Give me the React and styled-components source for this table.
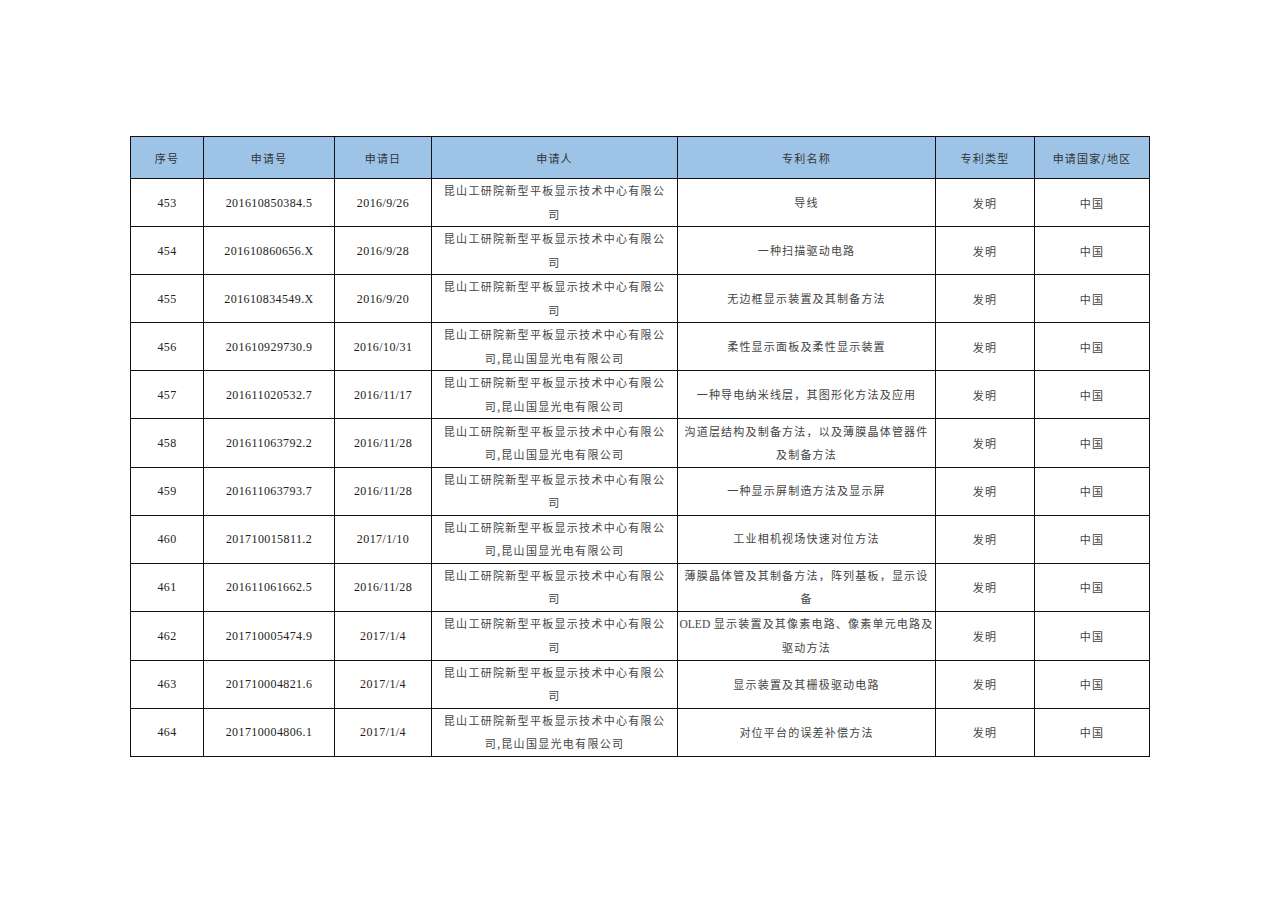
import React from "react";
import styled, { createGlobalStyle } from "styled-components";

const Global = createGlobalStyle`
  html, body { margin: 0; padding: 0; background: #fff; }
  body { font-family: "Liberation Serif", "Noto Sans CJK SC", serif; }
`;

const Page = styled.div`
  width: 1280px;
  height: 904px;
  box-sizing: border-box;
  padding: 136px 0 0 130px;
`;

const Table = styled.table`
  border-collapse: collapse;
  table-layout: fixed;
  width: 1019px;
  border: 1.5px solid #111;
`;

const HeadCell = styled.th`
  background: #9dc3e6;
  height: 41px;
  padding: 0;
  border: 1.5px solid #111;
  font-family: "Noto Sans CJK SC", sans-serif;
  font-weight: 400;
  font-size: 11px;
  letter-spacing: 1.2px;
  color: #333;
  text-align: center;
  vertical-align: middle;
`;

const Cell = styled.td`
  height: 47.1px;
  padding: 0;
  border: 1.5px solid #111;
  text-align: center;
  vertical-align: middle;
  font-family: ${(p) =>
    p.$num ? `"Liberation Serif", serif` : `"Noto Sans CJK SC", sans-serif`};
  font-size: ${(p) => (p.$num ? "12px" : "11px")};
  letter-spacing: ${(p) => (p.$num ? "0.4px" : p.$spacing || "0")};
  color: ${(p) => (p.$num ? "#222" : "#444")};
  line-height: 16px;
`;

const Line = styled.span`
  display: block;
  white-space: nowrap;
  line-height: 23.5px;
`;

const Latin = styled.span`
  font-family: "Liberation Serif", serif;
  letter-spacing: 0;
  font-size: 11.5px;
`;

const cols = [73, 131, 97, 246, 258, 99, 115];

const headers = ["序号", "申请号", "申请日", "申请人", "专利名称", "专利类型", "申请国家/地区"];

const A1 = ["昆山工研院新型平板显示技术中心有限公", "司"];
const A2 = ["昆山工研院新型平板显示技术中心有限公", "司,昆山国显光电有限公司"];

const rows = [
  ["453", "201610850384.5", "2016/9/26", A1, ["导线"]],
  ["454", "201610860656.X", "2016/9/28", A1, ["一种扫描驱动电路"]],
  ["455", "201610834549.X", "2016/9/20", A1, ["无边框显示装置及其制备方法"]],
  ["456", "201610929730.9", "2016/10/31", A2, ["柔性显示面板及柔性显示装置"]],
  ["457", "201611020532.7", "2016/11/17", A2, ["一种导电纳米线层，其图形化方法及应用"]],
  ["458", "201611063792.2", "2016/11/28", A2, ["沟道层结构及制备方法，以及薄膜晶体管器件", "及制备方法"]],
  ["459", "201611063793.7", "2016/11/28", A1, ["一种显示屏制造方法及显示屏"]],
  ["460", "201710015811.2", "2017/1/10", A2, ["工业相机视场快速对位方法"]],
  ["461", "201611061662.5", "2016/11/28", A1, ["薄膜晶体管及其制备方法，阵列基板，显示设", "备"]],
  [
    "462",
    "201710005474.9",
    "2017/1/4",
    A1,
    [
      <>
        <Latin>OLED</Latin> 显示装置及其像素电路、像素单元电路及
      </>,
      "驱动方法",
    ],
  ],
  ["463", "201710004821.6", "2017/1/4", A1, ["显示装置及其栅极驱动电路"]],
  ["464", "201710004806.1", "2017/1/4", A2, ["对位平台的误差补偿方法"]],
];

function Lines({ items }) {
  return items.map((t, i) => <Line key={i}>{t}</Line>);
}

export default function App() {
  return (
    <>
      <Global />
      <Page>
        <Table>
          <colgroup>
            {cols.map((w, i) => (
              <col key={i} style={{ width: w }} />
            ))}
          </colgroup>
          <thead>
            <tr>
              {headers.map((h) => (
                <HeadCell key={h}>{h}</HeadCell>
              ))}
            </tr>
          </thead>
          <tbody>
            {rows.map((r) => (
              <tr key={r[0]}>
                <Cell $num>{r[0]}</Cell>
                <Cell $num>{r[1]}</Cell>
                <Cell $num>{r[2]}</Cell>
                <Cell $spacing="1.3px">
                  <Lines items={r[3]} />
                </Cell>
                <Cell $spacing="1.2px">
                  <Lines items={r[4]} />
                </Cell>
                <Cell $spacing="1.2px">发明</Cell>
                <Cell $spacing="1.2px">中国</Cell>
              </tr>
            ))}
          </tbody>
        </Table>
      </Page>
    </>
  );
}
